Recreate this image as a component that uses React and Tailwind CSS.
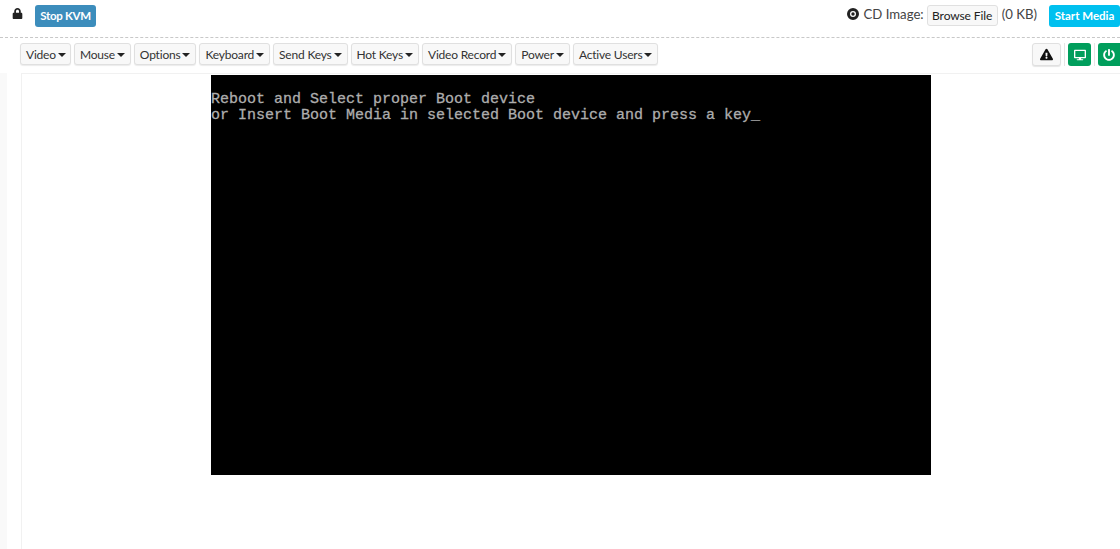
import { FaLock, FaExclamationTriangle, FaDesktop, FaPowerOff } from 'react-icons/fa'

const menus = ['Video', 'Mouse', 'Options', 'Keyboard', 'Send Keys', 'Hot Keys', 'Video Record', 'Power', 'Active Users']

function MenuButton({ label }) {
  return (
    <button className="flex h-[22px] items-center gap-[2px] rounded-[3px] border border-[#e0e0e0] bg-[#f8f8f8] px-[5px] pt-[1px] text-[12px] tracking-[-0.2px] text-[#333] shadow-[0_1px_1px_rgba(0,0,0,0.08)] first:pr-[4px]">
      {label}
      <span className="h-0 w-0 border-x-[4px] border-t-[4px] border-x-transparent border-t-[#222]"></span>
    </button>
  )
}

export default function App() {
  return (
    <div className="flex h-[549px] w-[1120px] flex-col overflow-hidden bg-white font-['Lato','Open_Sans',sans-serif]">
      {/* Top bar */}
      <div className="flex h-[38px] shrink-0 items-start justify-between border-b border-dashed border-[#c8c8c8] pt-[5px] pl-[12px]">
        <div className="flex items-start gap-[14px]">
          <FaLock className="mt-[3px] text-[11px] text-[#222]" />
          <button className="-ml-[2px] flex h-[22px] w-[61px] items-center justify-center rounded-[3px] bg-[#3c8dbc] text-[11.5px] font-bold tracking-[-0.3px] text-white">Stop KVM</button>
        </div>
        <div className="flex items-start text-[13.2px] leading-[18px] text-[#444]">
          <svg className="mt-[3px] mr-[4px]" width="12" height="12" viewBox="0 0 12 12">
            <circle cx="6" cy="6" r="4.5" fill="none" stroke="#222" strokeWidth="3" />
            <circle cx="6" cy="6" r="1.7" fill="#222" />
          </svg>
          <span className="mr-[3px]">CD Image:</span>
          <button className="flex h-[21px] w-[71px] items-center justify-center rounded-[3px] border border-[#e0e0e0] bg-[#f8f8f8] pt-[1px] text-[12px] tracking-[-0.1px] text-[#222]">Browse File</button>
          <span className="ml-[4px] mr-[12px]">(0 KB)</span>
          <button className="flex h-[22px] w-[71px] items-center justify-center rounded-[3px] bg-[#00c0ef] text-[11.5px] font-bold text-white">Start Media</button>
        </div>
      </div>

      {/* Toolbar */}
      <div className="flex h-[35px] shrink-0 items-start justify-between pt-[5px] pl-[20px]">
        <div className="flex gap-[3px]">
          {menus.map((m) => <MenuButton key={m} label={m} />)}
        </div>
        <div className="flex h-[23px] items-center">
          <button className="flex h-[23px] w-[29px] items-center justify-center rounded-[3px] border border-[#e0e0e0] bg-[#f8f8f8] shadow-[0_1px_1px_rgba(0,0,0,0.1)]">
            <FaExclamationTriangle className="text-[13px] text-[#111]" />
          </button>
          <span className="mx-[3px] h-[23px] w-px bg-[#e5e5e5]"></span>
          <button className="flex h-[23px] w-[23px] items-center justify-center rounded-[3px] bg-[#009e5c]">
            <FaDesktop className="text-[12px] text-white" />
          </button>
          <span className="mx-[3px] h-[23px] w-px bg-[#e5e5e5]"></span>
          <button className="flex h-[23px] w-[22px] items-center justify-center rounded-l-[3px] bg-[#009e5c]">
            <FaPowerOff className="text-[12px] text-white" />
          </button>
        </div>
      </div>

      {/* KVM area */}
      <div className="flex min-h-0 flex-1">
        <div className="w-[7px] shrink-0 bg-[#f9f9f9]"></div>
        <div className="ml-[14px] flex flex-1 justify-center border-l border-t border-[#f1f1f1] pt-[1px]">
          <div className="h-[400px] w-[720px] bg-black pt-[17px] font-['Liberation_Mono',monospace] text-[15px] leading-[16px] whitespace-pre text-[#b0b0b0] [-webkit-text-stroke:0.3px_#a8a8a8]">
            <div>Reboot and Select proper Boot device</div>
            <div>or Insert Boot Media in selected Boot device and press a key_</div>
          </div>
        </div>
      </div>
    </div>
  )
}
